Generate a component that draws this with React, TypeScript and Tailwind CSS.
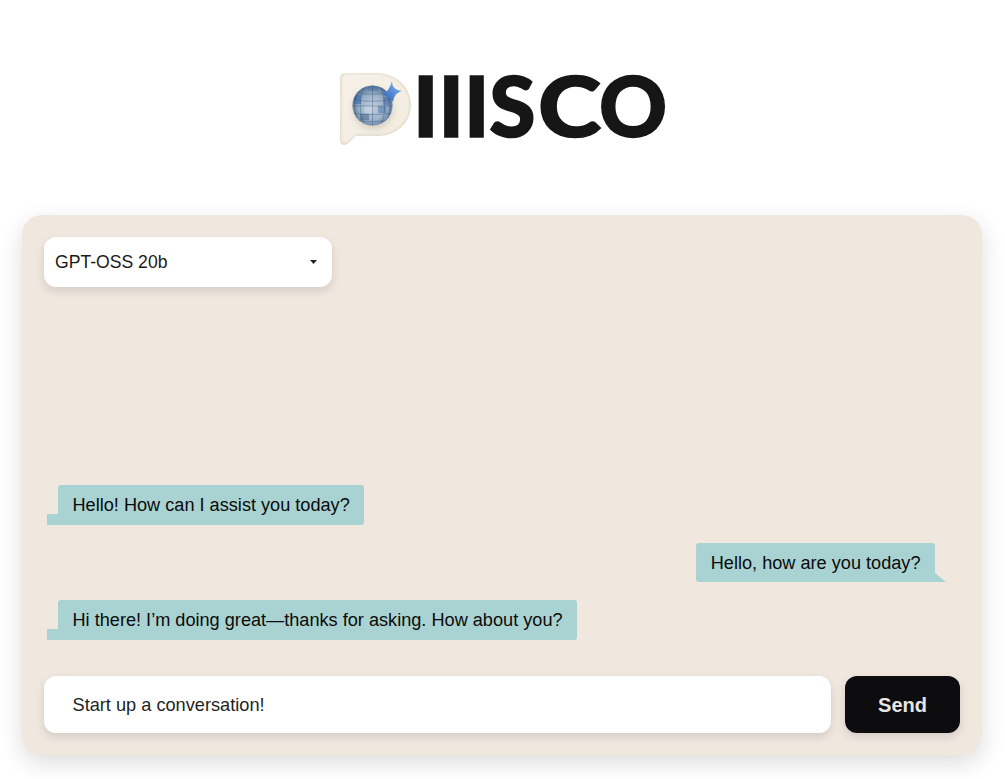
import React from 'react';

const LogoMark: React.FC = () => (
  <svg width="72" height="73" viewBox="0 0 72 73" className="shrink-0">
    <defs>
      <linearGradient id="card" x1="0" y1="0" x2="1" y2="1">
        <stop offset="0" stopColor="#f6f1e8" />
        <stop offset="1" stopColor="#f2ecdf" />
      </linearGradient>
      <radialGradient id="ball" cx="0.5" cy="0.55" r="0.6">
        <stop offset="0" stopColor="#c3d0de" />
        <stop offset="0.55" stopColor="#9ab0c8" />
        <stop offset="1" stopColor="#3f6088" />
      </radialGradient>
      <linearGradient id="spark" x1="1" y1="0" x2="0" y2="1">
        <stop offset="0" stopColor="#93bdf4" />
        <stop offset="1" stopColor="#2460b8" />
      </linearGradient>
      <filter id="soft" x="-30%" y="-30%" width="160%" height="160%">
        <feGaussianBlur stdDeviation="3" />
      </filter>
      <filter id="edge" x="-10%" y="-10%" width="120%" height="120%">
        <feGaussianBlur stdDeviation="1.2" />
      </filter>
      <clipPath id="ballClip">
        <circle cx="32.5" cy="32.5" r="20" />
      </clipPath>
    </defs>
    <path
      d="M6 0H37C56 0 71 14 71 32C71 50 56 63 37 63H16L7 71C4 73 0 72 0 67V6C0 2 2 0 6 0Z"
      fill="#e4dccd"
    />
    <path
      d="M7 1H37C55 1 69.5 15 69.5 32C69.5 49 55 61.5 37 61.5H16L8 69C5 71 1.5 70 1.5 66V6C1.5 3 4 1 7 1Z"
      fill="url(#card)"
      filter="url(#edge)"
    />
    <circle cx="33" cy="36" r="20" fill="#a89e8c" opacity="0.4" filter="url(#soft)" />
    <circle cx="32.5" cy="32.5" r="20" fill="url(#ball)" />
    <g clipPath="url(#ballClip)">
      <rect x="14" y="22" width="7" height="9" fill="#2f62a8" opacity="0.5" />
      <rect x="38" y="33" width="8" height="7" fill="#3b6cab" opacity="0.45" />
      <rect x="43" y="24" width="7" height="8" fill="#2f62a8" opacity="0.4" />
      <rect x="20" y="41" width="9" height="6" fill="#2d4f78" opacity="0.4" />
      <rect x="28" y="13" width="10" height="5" fill="#4a76a8" opacity="0.4" />
      <rect x="24" y="33" width="8" height="7" fill="#e2e8ef" opacity="0.3" />
      <g fill="none" stroke="#2d4a6b" strokeWidth="0.6" opacity="0.6">
        <path d="M16 19C24 22 41 22 49 19" />
        <path d="M13 26C22 29 43 29 52 26" />
        <path d="M12 33H53" />
        <path d="M13 40C22 42 43 42 52 40" />
        <path d="M17 47C24 49 41 49 48 47" />
        <path d="M32.5 12V53" />
        <path d="M24 14C19 26 19 40 24 51" />
        <path d="M41 14C46 26 46 40 41 51" />
        <path d="M17 20C14 28 14 38 17 46" />
        <path d="M48 20C51 28 51 38 48 46" />
      </g>
    </g>
    <path
      d="M52 8C52 14 55 17 62 18C56 20 54 23 53 29C50 25 47 23 43 22C47 19 50 15 52 8Z"
      fill="url(#spark)"
    />
  </svg>
);

const Bubble: React.FC<{ text: string; mine?: boolean }> = ({ text, mine }) => (
  <div className={`relative rounded-[3px] bg-[#a9d3d2] px-[14.5px] text-[18.15px] ${mine ? 'mr-[25px] self-end rounded-br-none pt-[9px] pb-[7px] leading-[23px]' : 'ml-[14px] self-start rounded-bl-none py-[8px] leading-[24px]'} text-[#0b0b0b]`}>
    {text}
    {mine ? (
      <svg width="11" height="9" viewBox="0 0 11 9" className="absolute -right-[11px] bottom-0">
        <path d="M0 0L11 9H0Z" fill="#a9d3d2" />
      </svg>
    ) : (
      <span className="absolute -left-[11px] bottom-0 h-[11px] w-[11px] bg-[#a9d3d2]" />
    )}
  </div>
);

export default function App() {
  return (
    <div className="min-h-[779px] overflow-hidden bg-white font-['Liberation_Sans',Arial,sans-serif]">
      {/* Logo */}
      <div className="flex h-[215px] items-start pt-[73px] pl-[340px]">
        <LogoMark />
        <span className="ml-[1px] font-['Lato',sans-serif] text-[84px] leading-[64px] font-black text-[#161616] [-webkit-text-stroke:1.5px_#161616]">
          III<span className="mr-[2px]">S</span>
          <span className="mr-[6px] inline-block origin-left scale-x-[1.14]">C</span>O
        </span>
      </div>

      {/* Chat panel */}
      <div className="mx-[22px] flex h-[540px] w-[960px] flex-col rounded-[20px] bg-[#f0e7df] p-[22px] shadow-[0_8px_24px_rgba(0,0,0,0.14)]">
        <div className="flex h-[50px] w-[288px] items-center justify-between rounded-[12px] bg-white pr-[15px] pl-[11px] text-[17.6px] text-[#1a1a1a] shadow-[0_4px_10px_rgba(0,0,0,0.12)]">
          <span>GPT-OSS 20b</span>
          <svg width="7" height="4" viewBox="0 0 7 4">
            <path d="M0 0H7L3.5 4Z" fill="#222222" />
          </svg>
        </div>

        <div className="flex flex-1 flex-col justify-end gap-[18px] pb-[36px]">
          <Bubble text="Hello! How can I assist you today?" />
          <Bubble text="Hello, how are you today?" mine />
          <Bubble text="Hi there! I’m doing great—thanks for asking. How about you?" />
        </div>

        <div className="flex h-[57px] gap-[14px]">
          <input
            placeholder="Start up a conversation!"
            className="h-full w-[787px] rounded-[12px] bg-white pt-[1px] pl-[28.5px] text-[18.2px] text-[#1a1a1a] shadow-[0_4px_10px_rgba(0,0,0,0.12)] outline-none placeholder:text-[#1f1f1f]"
          />
          <button className="h-full w-[115px] rounded-[12px] bg-[#0d0d0f] text-[20px] font-bold text-[#e6e6e6] shadow-[0_4px_10px_rgba(0,0,0,0.12)]">
            Send
          </button>
        </div>
      </div>
    </div>
  );
}
